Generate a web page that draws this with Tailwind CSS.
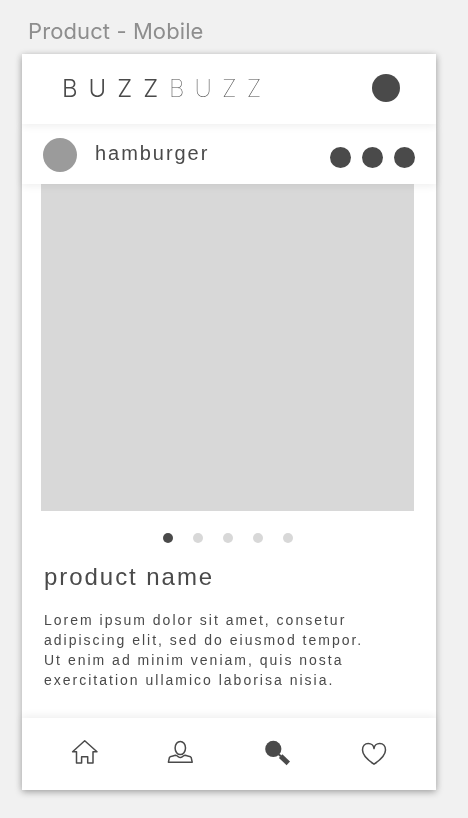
<!DOCTYPE html>
<html lang="en">
<head>
<meta charset="utf-8">
<title>Product - Mobile</title>
<script src="https://cdn.jsdelivr.net/npm/@tailwindcss/browser@4"></script>
</head>
<body class="w-[468px] h-[818px] overflow-hidden bg-[#f1f1f1] font-['Liberation_Sans',sans-serif] text-[#4a4a4a]">
<h1 class="h-[54px] pl-[28px] pt-[15px] font-['Inter',sans-serif] text-[22px] leading-8 tracking-[0.1px] text-[#8e8e8e] whitespace-nowrap will-change-transform">Product - Mobile</h1>
<main class="ml-[22px] w-[414px] h-[736px] flex flex-col bg-white shadow-[0_2px_7px_rgba(0,0,0,0.32)]">
  <header class="relative z-20 h-[70px] shrink-0 flex items-center justify-between pl-[40px] pr-[36px] bg-white shadow-[0_2px_8px_rgba(0,0,0,0.07)]">
    <div class="flex -mt-px font-['Inter',sans-serif] text-[24px] leading-8 whitespace-nowrap will-change-transform"><span class="w-[107px] font-light tracking-[11px]">BUZZ</span><span class="font-thin tracking-[10.2px] text-[#4a4a4a]">BUZZ</span></div>
    <span class="size-7 rounded-full bg-[#4a4a4a] -mt-[2px]"></span>
  </header>
  <section class="relative z-10 h-[60px] shrink-0 flex items-center pl-[21px] pr-[21px] bg-white shadow-[0_2px_8px_rgba(0,0,0,0.07)]">
    <span class="size-[34px] rounded-full bg-[#9b9b9b] mt-[2px]"></span>
    <h2 class="ml-[18px] -mt-[2px] text-[20px] leading-6 tracking-[1.95px] will-change-transform">hamburger</h2>
    <div class="ml-auto mt-[7px] flex gap-[11px]">
      <span class="size-[21px] rounded-full bg-[#4a4a4a]"></span><span class="size-[21px] rounded-full bg-[#4a4a4a]"></span><span class="size-[21px] rounded-full bg-[#4a4a4a]"></span>
    </div>
  </section>
  <div class="ml-[19px] w-[373px] h-[327px] shrink-0 bg-[#d8d8d8]"></div>
  <div class="mt-[22px] ml-[141px] flex gap-5">
    <span class="size-[10px] rounded-full bg-[#4a4a4a]"></span><span class="size-[10px] rounded-full bg-[#d8d8d8]"></span><span class="size-[10px] rounded-full bg-[#d8d8d8]"></span><span class="size-[10px] rounded-full bg-[#d8d8d8]"></span><span class="size-[10px] rounded-full bg-[#d8d8d8]"></span>
  </div>
  <h2 class="mt-[20px] ml-[22px] text-[24px] leading-7 tracking-[1.95px] will-change-transform">product name</h2>
  <p class="mt-[19px] ml-[22px] text-[14px] leading-5 tracking-[2px] whitespace-nowrap will-change-transform">Lorem ipsum dolor sit amet, consetur<br>adipiscing elit, sed do eiusmod tempor.<br>Ut enim ad minim veniam, quis nosta<br>exercitation ullamico laborisa nisia.</p>
  <nav class="relative z-10 mt-auto h-[72px] shrink-0 flex items-center justify-between pl-[49px] pr-[48px] pb-[4px] bg-white shadow-[0_-2px_8px_rgba(0,0,0,0.07)]">
    <svg class="size-7" viewBox="0 0 28 28" fill="none" stroke="#4a4a4a" stroke-width="1.5" stroke-linejoin="round"><path d="M13.7 2.7 1.6 13.7H5.5V25h5.1v-6.2h6.1V25H22V13.7h4Z"/></svg>
    <svg class="size-7" viewBox="0 0 28 28" fill="none" stroke="#4a4a4a" stroke-width="1.5" stroke-linejoin="round"><ellipse cx="13.3" cy="10" rx="5.2" ry="6.6"/><path d="M8.6 17.3C6 18.2 3 18 2.4 19.6L1.4 24.2H25.2L24.2 19.6C23.6 18 20.6 18.2 18 17.3 16 17.6 15 19.4 13.3 19.6 11.6 19.4 10.6 17.6 8.6 17.3Z"/></svg>
    <svg class="size-7" viewBox="0 0 28 28" fill="#4a4a4a"><circle cx="9.3" cy="10.9" r="8.1"/><path d="m14.9 16.5 2 1.8" stroke="#4a4a4a" stroke-width="2"/><path d="m16.6 18.1 7.7 7.2" stroke="#4a4a4a" stroke-width="5"/></svg>
    <svg class="size-7" viewBox="0 0 28 28" fill="none" stroke="#4a4a4a" stroke-width="1.5" stroke-linejoin="round"><path d="M14 10.6C13.7 7.5 11.2 5.5 8.3 5.5 4.8 5.5 2.5 8.2 2.5 12 2.5 17.6 8.6 22.6 14 26.2 19.4 22.6 25.5 17.6 25.5 12 25.5 8.2 23.2 5.5 19.7 5.5 16.8 5.5 14.3 7.5 14 10.6Z"/></svg>
  </nav>
</main>
</body>
</html>
